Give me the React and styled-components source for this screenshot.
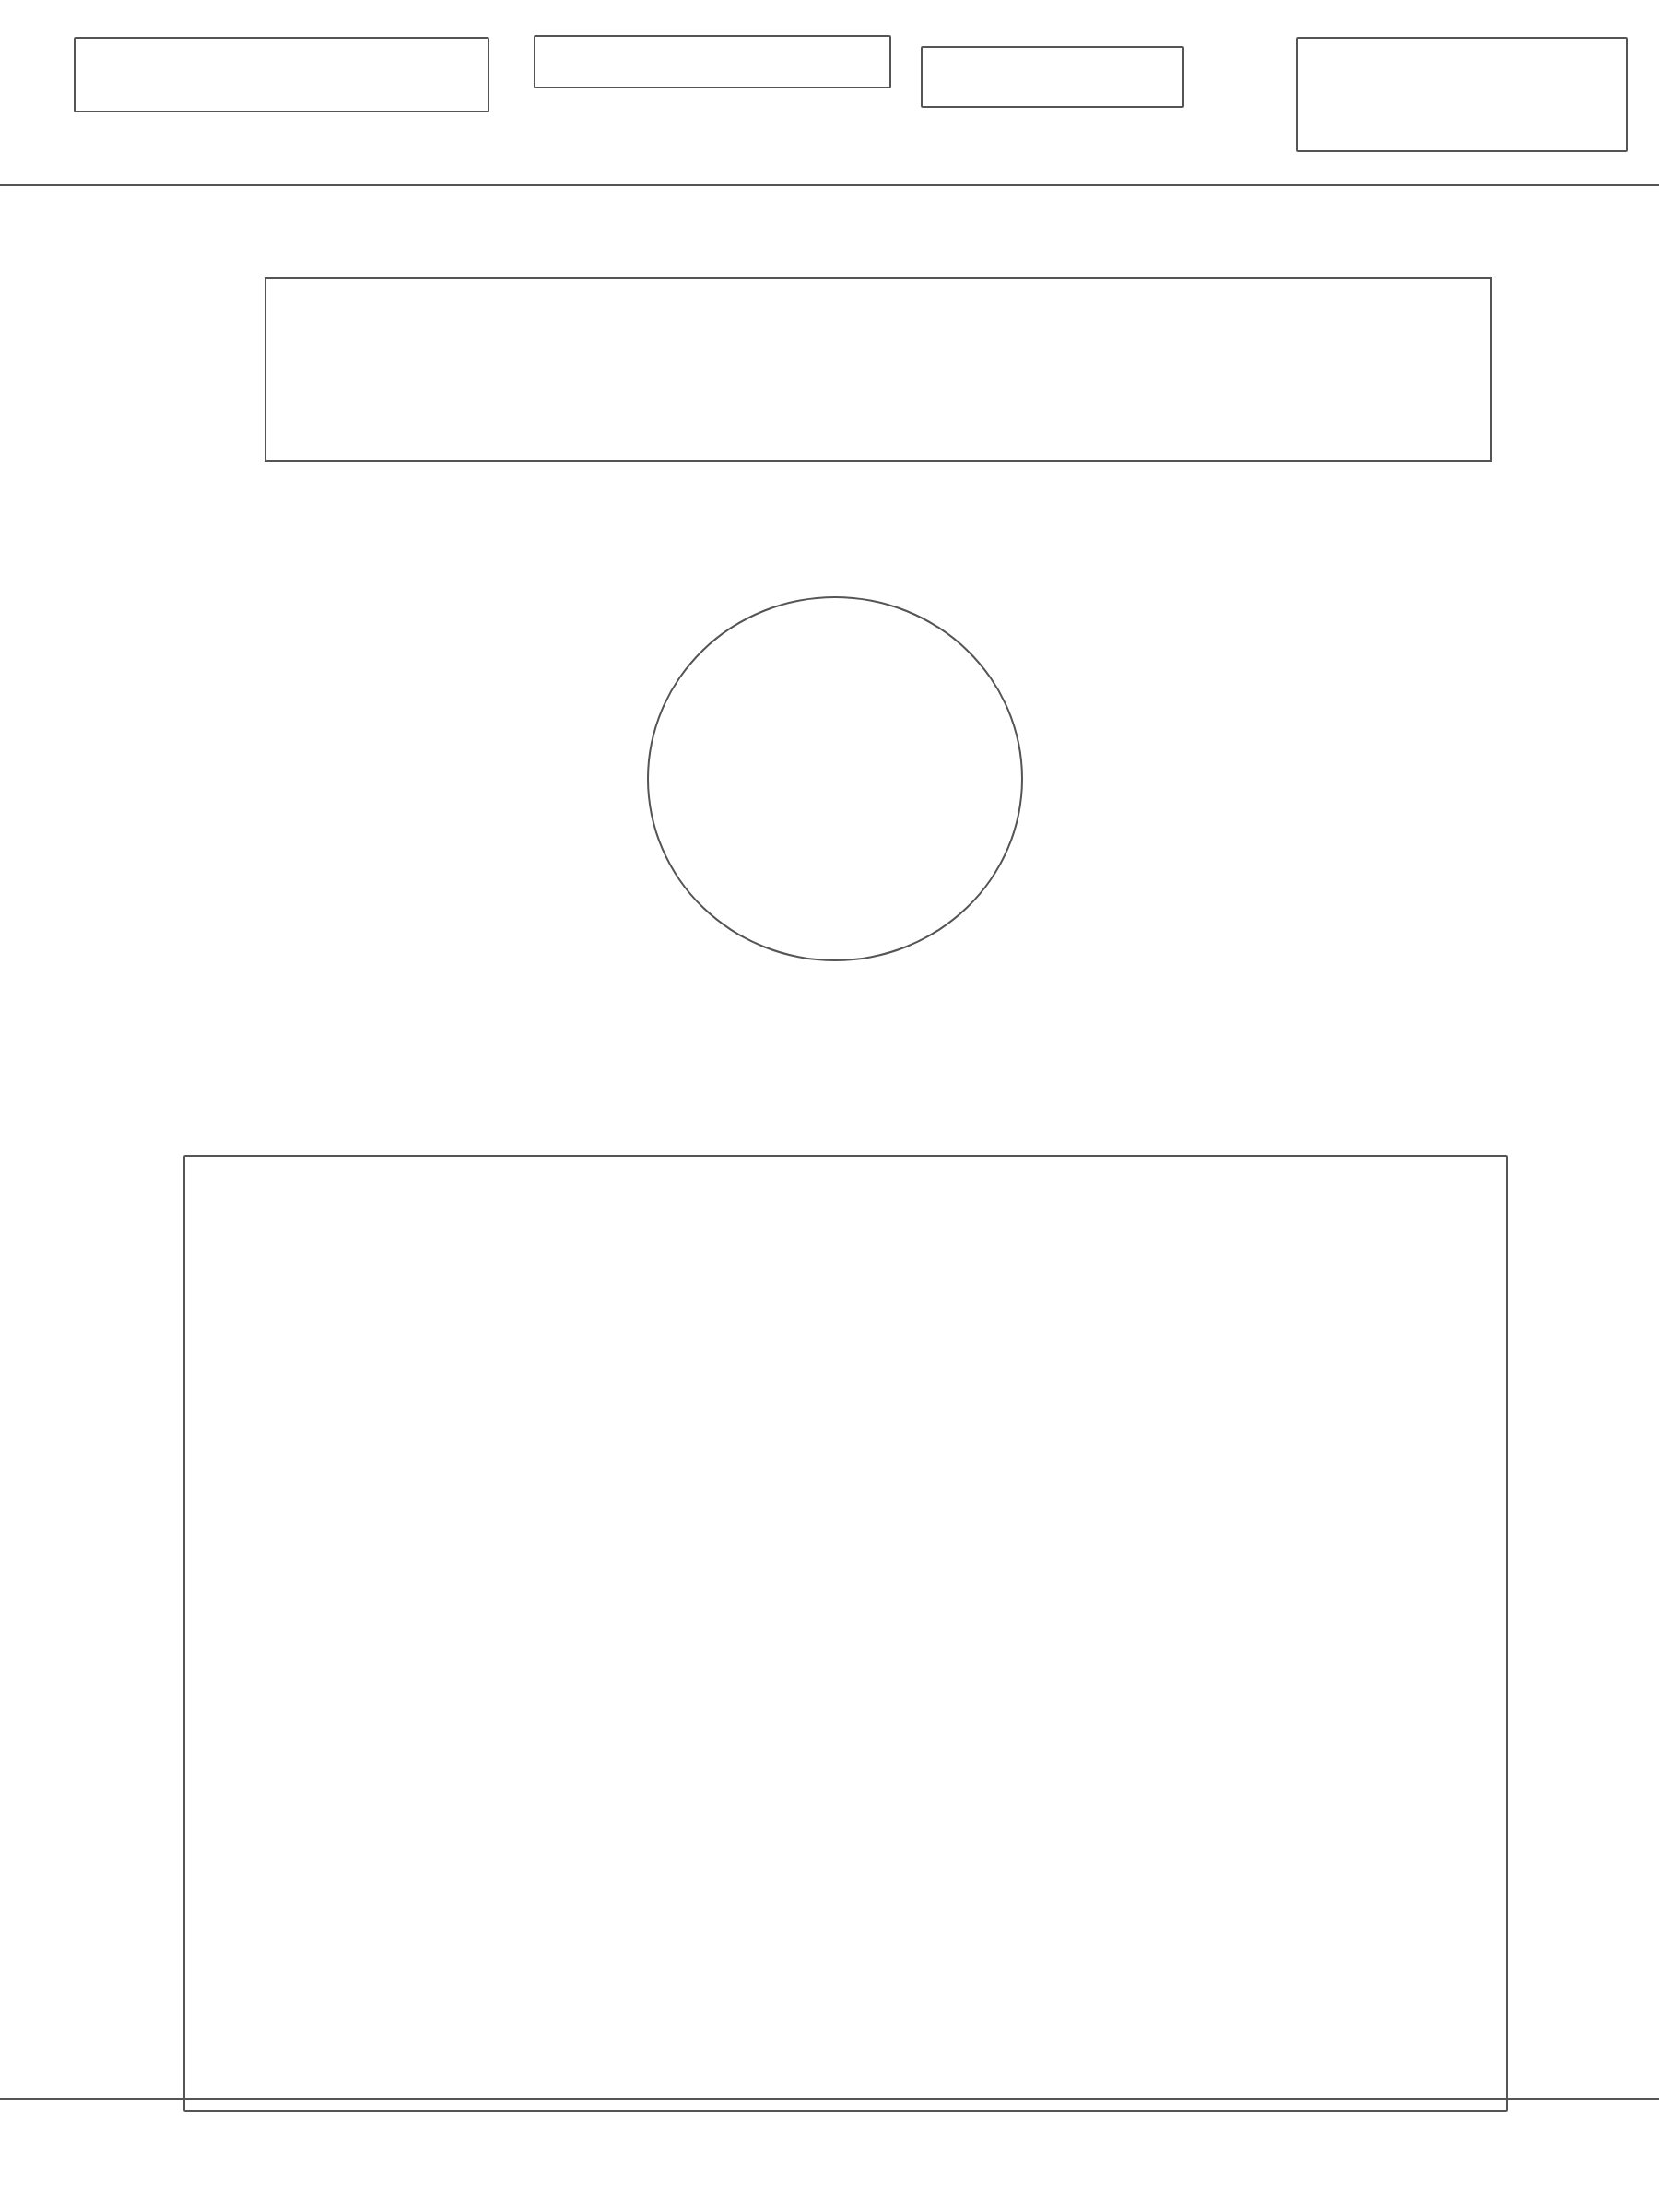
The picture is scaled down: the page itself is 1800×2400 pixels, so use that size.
import React from "react";
import styled, { createGlobalStyle } from "styled-components";

const Global = createGlobalStyle`
  html, body {
    margin: 0;
    padding: 0;
    background: #ffffff;
    font-family: "Liberation Sans", Arial, sans-serif;
  }
  * { box-sizing: border-box; }
`;

const stroke = "#555555";

const Page = styled.div`
  width: 1800px;
  min-height: 2400px;
  display: flex;
  flex-direction: column;
  background: #ffffff;
`;

const Header = styled.header`
  height: 202px;
  border-bottom: 2px solid ${stroke};
  display: flex;
  align-items: flex-start;
  padding-left: 80px;
`;

const Placeholder = styled.div`
  flex: none;
  width: ${(p) => p.$w}px;
  height: ${(p) => p.$h}px;
  margin-top: ${(p) => p.$top}px;
  margin-left: ${(p) => p.$left || 0}px;
  border: 2px solid ${stroke};
  border-radius: 2px;
`;

const Main = styled.main`
  display: flex;
  flex-direction: column;
  align-items: flex-start;
`;

const Banner = styled.section`
  margin-top: 99px;
  margin-left: 287px;
  width: 1332px;
  height: 200px;
  border: 2px solid ${stroke};
`;

const Avatar = styled.div`
  margin-top: 146px;
  margin-left: 702px;
  width: 408px;
  height: 396px;
  border: 2px solid ${stroke};
  border-radius: 50%;
`;

const ContentPanel = styled.section`
  margin-top: 210px;
  margin-left: 199px;
  margin-bottom: -15px;
  width: 1437px;
  height: 1038px;
  border: 2px solid ${stroke};
  border-radius: 2px;
`;

const Footer = styled.footer`
  flex: 1;
  min-height: 124px;
  border-top: 2px solid ${stroke};
`;

export default function App() {
  return (
    <>
      <Global />
      <Page>
        <Header>
          <Placeholder $w={451} $h={82} $top={40} />
          <Placeholder $w={388} $h={58} $top={38} $left={48} />
          <Placeholder $w={286} $h={67} $top={50} $left={32} />
          <Placeholder $w={360} $h={125} $top={40} $left={121} />
        </Header>
        <Main>
          <Banner />
          <Avatar />
          <ContentPanel />
        </Main>
        <Footer />
      </Page>
    </>
  );
}
